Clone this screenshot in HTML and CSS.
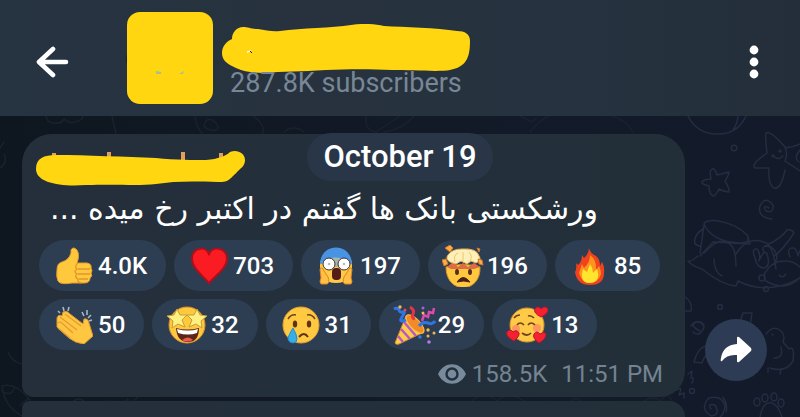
FILE: index.html
```html
<!DOCTYPE html>
<html lang="en">
  <head>
    <meta charset="UTF-8" />
    <meta name="viewport" content="width=device-width, initial-scale=1.0" />
    <title>Channel</title>
    <link rel="stylesheet" href="styles.css">
  </head>
  <body>
    <header class="topbar">
      <button class="icon-btn back" aria-label="Back">
        <svg width="34" height="32" viewBox="0 0 34 32" fill="none" stroke="#fff" stroke-width="4.6" stroke-linecap="round" stroke-linejoin="round">
          <path d="M18 3L4 16l14 13M4 16h27" />
        </svg>
      </button>
      <svg class="avatar" width="88" height="92" viewBox="0 0 88 92">
        <path d="M4 34Q-1 47 4 62z" fill="#05080d" />
        <rect x="2" width="86" height="92" rx="13" fill="#ffd60f" />
        <path d="M31 59l5 1v2h-5zM54 62l5-3-1 3z" fill="#a9bd8e" />
      </svg>
      <div class="title">
        <svg class="title-mark" width="250" height="50" viewBox="0 0 250 50">
          <path d="M0 29C0 22 5 17 10 15C10 8 15 3 21 3C26 3 29 5 36 5C44 6 50 8 58 7C80 4 110 4 129 1C143-1 153 0 162 2C182 3 215 4 235 7C243 7 248 10 248 17C248 34 244 43 228 46C218 48 190 46 170 46C150 45 125 45 104 46C80 48 60 47 42 49C26 49 18 46 12 43C5 40 0 36 0 29z" fill="#ffd60f" />
          <path d="M25 28l4-1z" stroke="#fff" /><path d="M28 27l2 2" stroke="#222" />
        </svg>
        <p class="subscribers">287.8K subscribers</p>
      </div>
      <button class="icon-btn menu" aria-label="Menu">
        <svg width="10" height="34" viewBox="0 0 10 34" fill="#fff">
          <circle cx="5" cy="5" r="4.4" /><circle cx="5" cy="17" r="4.4" /><circle cx="5" cy="29" r="4.4" />
        </svg>
      </button>
    </header>

    <main class="chat">
      <svg class="doodles" width="800" height="301" viewBox="0 0 800 301" fill="none" stroke-width="1.5" stroke-linecap="round" stroke-linejoin="round">
        <g stroke="#19222d">
          <path d="M46 0q1 8 10 7q5 1 8-4q5 5 11 3q8-2 8-6M112 0l4 18M195 0q2 14 8 18M204 10q1-8 8-6q8 5 5 10q-8 2-13-4zM253 0q14 10 9 18M284 16q10-8 20 0M366 0q-2 14 10 16l24-16M384 16q18-2 30-16M520 0l12 6 4-4M530 16q20-26 54-22q40 4 49 22" />
          <path d="M0 32l4-6M0 52q8-6 4-14M8 236q4 10 14 12M2 270q14-4 28 14M2 270q2 20 20 30M2 275q8 6 12-2M20 289l8-6M72 286q8-6 12 0M106 285q12 10 22-2M135 284l5-6" />
          <path d="M472 285q12-12 25 0q12-10 27 0M572 285q4-6 8 0M644 285q10-6 16 0q8-10 12 0" />
        </g>
        <g stroke="#262c42">
          <path d="M688 0q9 18 29 18q20 1 29-18M738 0q-1 9-5 14" />
          <circle cx="734" cy="32" r="2.8" />
          <path d="M712 53q3-1 5 6l12-3q0 3-4 9q5 8 4 11q-5 0-10-3q-4 8-6 7q-4-2-4-10q-8-2-7-4q2-3 9-3q-2-8 1-10z" />
          <path d="M766 17q4-3 19 14q3 2 15-3M785 31q3 7 0 14l15 10M785 54q-4 20-11 18q-6-3-5-20l-14 0q-5-3 12-15q-2-18-1-20M774 40q4 5 9 0M800 34q-7 8-1 12" />
          <circle cx="773" cy="40" r="1" /><circle cx="780" cy="35" r="1" />
          <path d="M704 108c2-7 30-3 43 11q5 8-8 8q-28-2-35-19zM704 109l-4 28M748 122l2 6-37-2-13 14M703 113q-10 6-8 15l6 3M698 140q-7 6-10 5q4 5 14 8q20 16 34 17l2-5q30 15 62-3" />
          <path d="M704 137q16-17 24-10q8 3 8 23M714 143q0 13 8 17M736 138q11-18 28-12q9 2 12 27M765 130q17-8 22-16q5-1 7 3q-12 18-20 23M764 136q-4-8 7-5q8 6 5 14M767 154c8-12 29-13 37 3q-16 21-38 8q-4-6 1-11zM779 159q3 4 7-1M755 142q-4-10 2-9q4 4 2 12q5-12 8-7q4 12-3 14q-7 0-9-10zM790 141q-4-10 4-9q3 2 4 8q2-8 5-7" />
          <circle cx="762" cy="162" r="3" /><circle cx="766" cy="173" r="2.5" />
          <path d="M769 92q-7-4-3 3q8 3 7-6q-8-10-13 1q-3 11 12 13" />
          <path d="M684 180q9 6 7 15h-7" /><circle cx="720" cy="191" r="2.4" />
          <path d="M700 215q-9-4-6-8q8-4 10 4q-4 11-11 5M691 210q5-8 13-1M740 206l3-9 9 0-2 14M694 246q4-15 13-16l4 7q-7 2-9 10z" />
          <path d="M766 218q7-9 14-4q6 5 3 12l6 7q6-4 4 12q-7 12-23 7M781 231q3 11-7 11M768 252v4M781 253l-1 5M772 218l1 1" />
          <path d="M688 258l4-3-1 7q4-1 1 5M677 274q6-5 2 5l5-2v5" /><circle cx="692" cy="275" r="2.5" />
          <path d="M711 293q-4-6 4-4q6 10-4 11q-12-8-2-18q13-3 16 8q-1 8-5 11M723 281q5 8 3 15M760 301q3-16 12-14q6 2 10 14" />
          <ellipse cx="757" cy="286" rx="3" ry="4" /><ellipse cx="765" cy="282" rx="3" ry="4" /><ellipse cx="774" cy="281" rx="3" ry="4" /><ellipse cx="781" cy="287" rx="3" ry="4" />
        </g>
      </svg>

      <div class="row">
        <article class="bubble">
          <svg class="name-mark" width="210" height="37" viewBox="0 0 210 37">
            <path d="M16 3h4v6h-4zM71 2h4v7h-4zM145 2h4v10h-4zM183 3h4v6h-4zM198 15l5-2v6l-4 5z" fill="#dda15c" />
            <path d="M0 19C0 8 8 5 20 5C50 5 90 7 120 8C140 10 158 10 170 10C182 9 190 6 194 2C201-1 209 3 209 10C209 16 205 18 202 21L195 28C191 32 188 32 182 32C156 31 138 31 120 34C100 36 85 34 50 35C25 37 0 33 0 19z" fill="#ffd60f" />
          </svg>
          <p class="message" lang="fa" dir="rtl">ورشکستی بانک ها گفتم در اکتبر رخ میده ...</p>

          <div class="reactions">
            <button class="reaction">
              <svg class="emoji" viewBox="0 0 38 38" aria-label="Thumbs up">
                <path d="M2 23q0-7 5-8q7-2 9-9V3q2-4 6 0q3 5 0 13h10q5 1 4 5q2 3 0 5q2 3-1 5q0 5-6 5H17q-12 2-14-2q-2-4-1-11z" fill="#ffc83d" stroke="#e79b2c" />
                <path d="M23 16q-4 3-1 6q-4 3 0 5q-3 3 1 5q-1 3 3 4M23 22h12M23 27h12M24 32h9" fill="none" stroke="#e2942b" stroke-width="1.3" />
              </svg>
              <span>4.0K</span>
            </button>
            <button class="reaction">
              <svg class="emoji" viewBox="0 0 38 38" aria-label="Heart">
                <path d="M19 36C12 28 2 21 2 12C2 1 15-2 19 7C23-2 37 1 37 12C37 21 26 28 19 36z" fill="#fb1b22" stroke="#ae101b" stroke-width="2" />
              </svg>
              <span>703</span>
            </button>
            <button class="reaction">
              <svg class="emoji" viewBox="0 0 38 38" aria-label="Screaming face">
                <path d="M3 19C3-4 35-4 35 19q0 17-16 17T3 19z" fill="#ffca45" />
                <path d="M3 17C4-5 34-5 35 17q-15-4-32 0z" fill="#4993e5" />
                <path d="M5 15q13-9 28 0l-2 5H7z" fill="#a5b7ad" />
                <circle cx="12" cy="17" r="6" fill="#fff" stroke="#3e3028" /><circle cx="27" cy="17" r="6" fill="#fff" stroke="#3e3028" />
                <circle cx="12" cy="17" r="1.3" fill="#bbb" /><circle cx="27" cy="17" r="1.3" fill="#bbb" />
                <rect x="15" y="21" width="9" height="12" rx="4" fill="#551d18" />
                <path d="M3 22q2-3 4 2l4 6q2 6-1 7H4q-2-2 0-6zM35 22q-2-3-4 2l-4 6q-2 6 1 7h6q2-2 0-6z" fill="#ffc044" stroke="#dc8429" />
              </svg>
              <span>197</span>
            </button>
            <button class="reaction">
              <svg class="emoji wide" viewBox="0 0 42 42" aria-label="Exploding head">
                <path d="M4 22q17-5 34 0c1 27-34 28-34 0z" fill="#ffc83e" stroke="#dc922a" />
                <path d="M5 22l6-5 5 5 5-4 5 4 6-4 6 4-6 2H9z" fill="#dc6c43" />
                <path d="M8 17q-5-3-2-7q4-6 14-6q15-1 17 7q3 4-3 7l-5-2-4 3-6-3-5 3z" fill="#ffefb9" stroke="#e8b358" />
                <path d="M13 17q-2-7 3-9M21 16V7M28 16q3-5-1-9" fill="none" stroke="#f0c46e" />
                <path d="M3 3l5-3 3 3-3 4zM0 15l4-1 2 5-4 2zM36 14l4 1 1 5-4-1zM35 3l3 1-1 3z" fill="#ffad42" stroke="#cd7531" />
                <ellipse cx="15" cy="27" rx="2" ry="3" fill="#54301d" /><ellipse cx="28" cy="27" rx="2" ry="3" fill="#54301d" />
                <path d="M15 37q6-9 13 0q-6-2-13 0z" fill="#4b2018" stroke="#4b2018" />
              </svg>
              <span>196</span>
            </button>
            <button class="reaction">
              <svg class="emoji" viewBox="0 0 38 38" aria-label="Fire">
                <path d="M18 1q0 6-5 10l-2-3q0 7-4 10l-2-2q1 6-1 9q2 13 15 13q14 0 14-12q1-6-2-11l-2 4q0-7-4-10q-6-3-7-8z" fill="#f0431d" />
                <path d="M19 8q0 8-6 13l-2-4-3 9q3 10 11 10t11-9q0-4-2-8l-3 4q1-10-6-15z" fill="#ff931e" />
                <path d="M19 17l-3 8-4-3q-4 14 7 14q11-1 7-14l-4 4q0-5-3-9z" fill="#ffe52e" />
              </svg>
              <span>85</span>
            </button>
            <button class="reaction">
              <svg class="emoji" viewBox="0 0 38 38" aria-label="Clapping hands">
                <path d="M2 12q1-4 5-2l1-4q4-2 7 2l13 10 1-5q4-1 5 4l4 13-9 8q-9-1-15-6L2 21z" fill="#ffc642" stroke="#df962b" />
                <path d="M3 17q2-2 5 1l10 9M5 11l17 13M10 8l16 12M3 22l12 10" fill="none" stroke="#e49b32" stroke-width="1.2" />
                <path d="M3 5l2 2M8 1l1 4M14 1l-1 4M27 6l2 4M32 4v5M36 9l-3 3M37 14l-3 1" stroke="#a7b7c4" stroke-width="1.6" />
              </svg>
              <span>50</span>
            </button>
            <button class="reaction">
              <svg class="emoji wide" viewBox="0 0 42 42" aria-label="Star eyes">
                <circle cx="21" cy="21" r="18" fill="#ffc93e" stroke="#d98c29" />
                <path d="M10 24q11 3 23 0q0 14-11 14T10 24z" fill="#5b2618" />
                <path d="M11 25q11 3 21 0l-1 4q-9 3-19 0z" fill="#fff" />
                <path d="M16 36q6-5 11 0q-6 3-11 0z" fill="#ee5752" />
                <path d="M11 5l3 6 7 0-5 5 3 7-7-3-6 4 1-7-6-5 7-1z" fill="#fff083" stroke="#c89c33" />
                <path d="M31 5l-3 6-7 0 5 5-3 7 7-3 6 4-1-7 6-5-7-1z" fill="#fff083" stroke="#c89c33" />
              </svg>
              <span>32</span>
            </button>
            <button class="reaction">
              <svg class="emoji" viewBox="0 0 38 38" aria-label="Crying face">
                <circle cx="19" cy="19" r="18" fill="#ffca42" stroke="#e29e32" />
                <path d="M6 13q3-5 8-4M25 9q5-1 8 4" fill="none" stroke="#74411f" stroke-width="1.5" />
                <ellipse cx="13" cy="18" rx="2.2" ry="3.5" fill="#603318" /><ellipse cx="27" cy="18" rx="2.2" ry="3.5" fill="#603318" />
                <path d="M17 31q5-6 9 0" fill="none" stroke="#603318" stroke-width="2" />
                <path d="M11 22q-5 8-5 11q1 4 5 4t4-4q0-4-4-11z" fill="#37aeea" stroke="#248bc5" />
              </svg>
              <span>31</span>
            </button>
            <button class="reaction">
              <svg class="emoji party" viewBox="0 0 44 40" aria-label="Party popper">
                <path d="M14 11L3 38q1 2 4 1l23-11q-2-11-16-17z" fill="#ffcd47" stroke="#d58a31" />
                <path d="M12 17l12 14M9 24l9 10M6 31l5 6" stroke="#b75bc1" stroke-width="2.5" />
                <ellipse cx="23" cy="19" rx="12" ry="5" transform="rotate(46 23 19)" fill="#f18b28" stroke="#ffbf48" />
                <path d="M2 4q4-2 5 1t4 2-1 5 4 3M27 21q4-5 9-3t7-2" fill="none" stroke="#2f76e5" stroke-width="3" />
                <path d="M18 2q5 3 3 7t2 5" fill="none" stroke="#eb3347" stroke-width="3" />
                <path d="M30 16l2-6 4 2 1-5 4 1 1-5" fill="none" stroke="#dd4cac" stroke-width="2.5" />
                <g fill="#f1ba55"><circle cx="8" cy="2" r="1.7" /><circle cx="36" cy="25" r="1.7" /><circle cx="42" cy="28" r="1.5" /><circle cx="31" cy="8" r="1.5" /></g>
                <circle cx="13" cy="5" r="1.5" fill="#ed4455" /><circle cx="31" cy="3" r="1.5" fill="#a85fd8" />
                <circle cx="28" cy="32" r="1.8" fill="#2f76e5" /><circle cx="37" cy="37" r="1.8" fill="#bd78db" /><circle cx="36" cy="31" r="1.5" fill="#e7b75a" />
              </svg>
              <span>29</span>
            </button>
            <button class="reaction">
              <svg class="emoji wide" viewBox="0 0 42 42" aria-label="Smiling face with hearts">
                <circle cx="21" cy="21" r="17" fill="#ffca46" stroke="#dc9030" />
                <circle cx="10" cy="25" r="4" fill="#ff965d" /><circle cx="31" cy="24" r="4" fill="#ff965d" />
                <path d="M8 14q2-3 6-3M22 12q3-1 6 2M11 21q3-4 7 0M22 21q3-4 7 0M16 29q5 4 9 0" fill="none" stroke="#75421f" stroke-width="1.7" />
                <g fill="#f32131" stroke="#be1529">
                  <path d="M35 13q-8-4-6-8q3-4 6 0q4-4 7 0q1 4-7 8z" />
                  <path d="M8 37q-9-5-7-9q3-4 6 0q4-3 6 1q1 3-5 8z" />
                  <path d="M33 39q-7-5-5-9q3-4 6 0q4-3 6 0q0 5-7 9z" />
                </g>
              </svg>
              <span>13</span>
            </button>
          </div>

          <footer class="meta">
            <svg width="28" height="20" viewBox="0 0 28 20">
              <path d="M0 10C6-3 22-3 28 10C22 23 6 23 0 10z" fill="#788b9c" />
              <circle cx="14" cy="10" r="5.5" fill="#788b9c" stroke="#232f3b" stroke-width="2.4" />
            </svg>
            <span class="views">158.5K</span>
            <time>11:51 PM</time>
          </footer>
        </article>
        <button class="share" aria-label="Share">
          <svg width="32" height="28" viewBox="0 0 32 28">
            <path d="M17 2Q17 0 19 1L31 12Q32 14 31 15L19 26Q17 27 17 25V19Q7 18 2 25Q0 26 1 22Q3 9 17 8z" fill="#fff" />
          </svg>
        </button>
      </div>
      <div class="bubble next"></div>
      <div class="date"><time>October 19</time></div>
    </main>
  </body>
</html>
```
FILE: styles.css
```css
* {
  box-sizing: border-box;
}

body {
  margin: 0;
  height: 100vh;
  display: flex;
  flex-direction: column;
  overflow: hidden;
  background: #111925;
  color: #fff;
  font-family: Roboto, "Noto Sans", sans-serif;
}

p {
  margin: 0;
}

svg {
  display: block;
  flex: none;
}

button {
  padding: 0;
  border: none;
  color: inherit;
  font: inherit;
  cursor: pointer;
}

/* top bar */
.topbar {
  flex: none;
  display: flex;
  align-items: flex-start;
  height: 116px;
  padding: 12px 39px 0 35px;
  background: linear-gradient(90deg, #263340, #28323f 40%, #26323f 70%, #232e3a);
}
.icon-btn {
  height: 100px;
  display: flex;
  align-items: center;
  background: none;
}
.avatar {
  margin-left: 56px;
}
.title {
  flex: 1;
  padding: 12px 0 0 9px;
}
.subscribers {
  margin-top: -6px;
  padding-left: 8px;
  font-size: 27px;
  line-height: 30px;
  color: #788796;
}
.menu {
  width: 12px;
}

/* messages */
.chat {
  flex: 1;
  display: flex;
  flex-direction: column;
  position: relative;
  min-height: 0;
  padding: 18px 33px 0 22px;
  background: linear-gradient(90deg, #0e171f, #121927 50%, #131a2a);
}
.doodles {
  position: absolute;
  top: 0;
  right: 0;
}
.row {
  position: relative;
  flex: none;
  display: flex;
  align-items: flex-end;
  gap: 20px;
}
.bubble {
  flex: 1;
  padding: 16px 16px 8px 17px;
  background: linear-gradient(90deg, #242f3b, #222f39);
  border-radius: 30px 30px 26px 12px;
}
.next {
  position: relative;
  margin: 4px 82px 0 0;
  padding: 0;
  border-radius: 12px 26px 0 0;
}
.name-mark {
  margin-left: -3px;
}
.message {
  padding-right: 71px;
  margin: 4px 0 13px;
  font-family: "DejaVu Sans", sans-serif;
  font-size: 30px;
  line-height: 36px;
  white-space: nowrap;
}

.reactions {
  display: flex;
  flex-wrap: wrap;
  gap: 8px;
}
.reaction {
  display: flex;
  align-items: center;
  gap: 5px;
  height: 51px;
  padding: 0 19px 0 16px;
  border-radius: 26px;
  background: #2d3e53;
  font-size: 24px;
  font-weight: 500;
}
.emoji {
  width: 38px;
  height: 38px;
  fill: none;
}
.wide {
  width: 42px;
  height: 42px;
  margin: 0 -2px;
}
.party {
  width: 44px;
  height: 40px;
  margin: 0 -3px;
}

.meta {
  display: flex;
  align-items: center;
  justify-content: flex-end;
  margin-top: 9px;
  padding-right: 6px;
  font-size: 24px;
  line-height: 30px;
  color: #738391;
}
.views {
  margin: 0 14px 0 6px;
}

.share {
  display: flex;
  align-items: center;
  justify-content: center;
  width: 62px;
  height: 62px;
  margin-bottom: 16px;
  border-radius: 50%;
  background: #2e3b54;
}

/* floating day label */
.date {
  position: absolute;
  top: 17px;
  left: 0;
  right: 0;
  display: flex;
  justify-content: center;
}
.date time {
  padding: 0 16px;
  border-radius: 24px;
  background: #293648;
  font-size: 31px;
  font-weight: 500;
  line-height: 48px;
}
```
